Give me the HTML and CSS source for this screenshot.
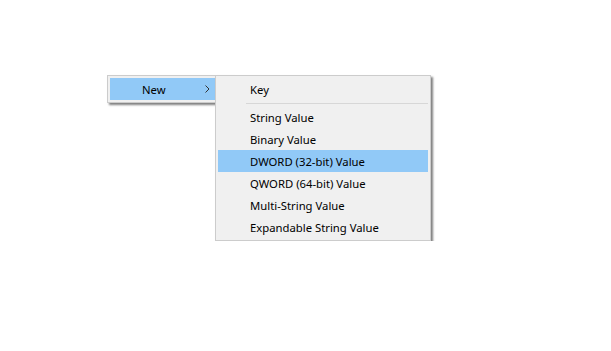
FILE: index.html
```html
<!DOCTYPE html>
<html lang="en">
<head>
  <meta charset="UTF-8" />
  <meta name="viewport" content="width=device-width, initial-scale=1.0" />
  <title>New menu</title>
  <link rel="stylesheet" href="styles.css">
</head>
<body>
  <div class="stage">
    <div class="menu">
      <div class="item active">
        <span class="label">New</span>
        <svg class="arrow" width="5" height="8" viewBox="0 0 5 8">
          <path d="M0.5 0.5 L4 4 L0.5 7.5" fill="none" stroke="#333" stroke-width="1" />
        </svg>
      </div>
    </div>

    <div class="submenu">
      <div class="item">Key</div>
      <div class="sep"></div>
      <div class="item">String Value</div>
      <div class="item">Binary Value</div>
      <div class="item active">DWORD (32-bit) Value</div>
      <div class="item">QWORD (64-bit) Value</div>
      <div class="item">Multi-String Value</div>
      <div class="item">Expandable String Value</div>
    </div>
  </div>
</body>
</html>
```

FILE: styles.css
```css
body {
  margin: 0;
  background: #fff;
  font-family: "Segoe UI", "Noto Sans", "Open Sans", sans-serif;
  font-size: 11.3px;
  color: #000;
}
.stage {
  display: flex;
  align-items: flex-start;
  padding: 75px 0 0 107px;
}
.menu,
.submenu {
  flex: none;
  background: #f0f0f0;
  border: 1px solid #cccccc;
  padding: 2px;
  box-shadow: 2px 2px 2px rgba(0, 0, 0, 0.5);
}
.menu {
  width: 120px;
}
.submenu {
  position: relative;
  width: 210px;
  margin-left: -18px;
}
.item {
  height: 22px;
  line-height: 23px;
  padding-left: 32px;
  white-space: nowrap;
}
.item.active {
  background: #91c9f7;
}
.menu .item {
  display: flex;
  align-items: center;
}
.menu .arrow {
  margin-left: 39px;
}
.sep {
  height: 1px;
  background: #d7d7d7;
  margin: 3px 0 2px 28px;
}
```
